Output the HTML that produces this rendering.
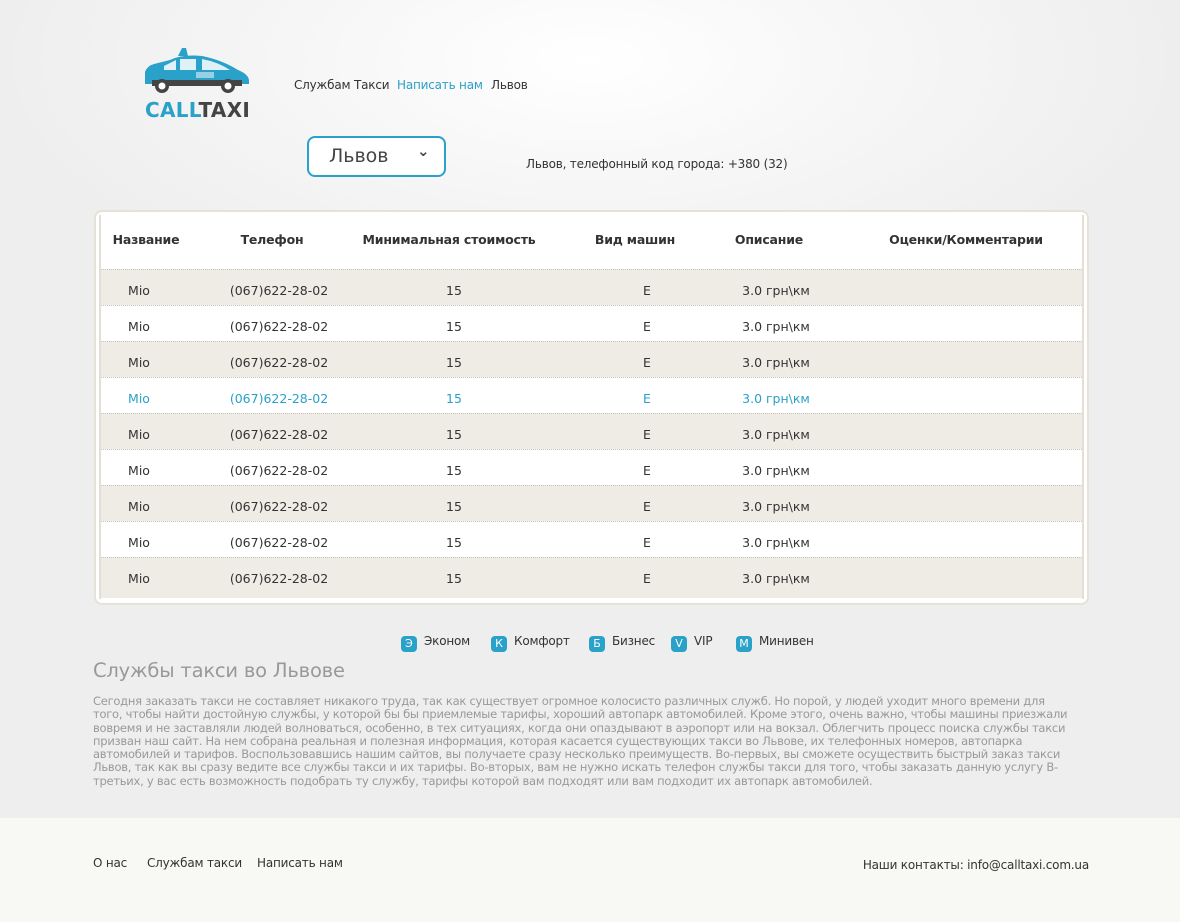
<!DOCTYPE html>
<html><head><meta charset="utf-8"><style>
body{margin:0;width:1180px;height:922px;position:relative;font-family:"DejaVu Sans","Liberation Sans",sans-serif;background:#eeeeee;overflow:hidden;color:#333}
.bg{position:absolute;left:0;top:0;width:1180px;height:818px;background:radial-gradient(ellipse 600px 260px at 590px 60px,#fff 0%,#f6f6f6 50%,#eeeeee 100%)}
.a{position:absolute;white-space:nowrap}
.nav{font-size:12px;top:78px;letter-spacing:-0.2px}
.sel{left:307px;top:136px;width:135px;height:37px;border:2px solid #2aa1c8;border-radius:8px;background:#fff}
.box{left:94px;top:210px;width:991px;height:391px;border:2px solid #e6e2d8;border-radius:8px;background:#fff}
.inner{left:99px;top:215px;width:981px;height:384px;border:2px solid #e3dfd5;border-top:none;border-bottom:none}
.row{position:absolute;left:101px;width:981px;height:35px;border-top:1px dotted #c8c4bb;font-size:12.5px}
.row span{position:absolute;top:13px;transform:translateX(-50%)}
.sh{background:#efece6}
.hd{font-size:12.5px;font-weight:bold;top:232px;transform:translateX(-50%);color:#333;letter-spacing:-0.2px}
.lg{font-size:12px;top:634px;letter-spacing:-0.2px}
.ic{display:inline-block;width:16px;height:16px;border-radius:4px;background:#2aa1c8;color:#fff;font-size:11px;text-align:center;line-height:16px;margin-right:7px;vertical-align:-2px;letter-spacing:0}
.txt{left:93px;top:695px;width:975px;font-size:11.5px;line-height:13.3px;color:#999;white-space:normal;letter-spacing:-0.25px}
.ft{position:absolute;left:0;top:818px;width:1180px;height:104px;background:#f8f9f4}
</style></head><body>
<div class="bg"></div>
<svg class="a" style="left:142px;top:44px" width="110" height="56" viewBox="0 0 110 52">
<path d="M3 34 L3 26 Q5 20 12 18 L28 14 Q40 8 60 10 Q80 14 96 24 Q106 28 107 34 L107 38 L3 38 Z" fill="#2aa1c8"/>
<path d="M36 10 L40 2 L44 2 L46 10 Z" fill="#2aa1c8"/>
<path d="M22 20 L34 14 L34 24 L22 24 Z M38 13 L54 13 L54 24 L38 24 Z M60 13 Q76 16 88 24 L60 24 Z" fill="#fff" opacity=".85"/>
<rect x="54" y="26" width="18" height="6" fill="#fff" opacity=".5"/>
<rect x="10" y="34" width="90" height="6" fill="#444"/>
<circle cx="20" cy="40" r="7" fill="#444"/><circle cx="20" cy="40" r="3.5" fill="#fff"/>
<circle cx="86" cy="40" r="7" fill="#444"/><circle cx="86" cy="40" r="3.5" fill="#fff"/>
</svg>
<div class="a" style="left:145px;top:98px;font-size:20px;font-weight:bold;letter-spacing:0.3px;color:#2aa1c8">CALL<span style="color:#444">TAXI</span></div>
<div class="a nav" style="left:294px">Службам Такси</div>
<div class="a nav" style="left:397px;color:#2aa1c8">Написать нам</div>
<div class="a nav" style="left:491px">Львов</div>
<div class="a sel"><span style="position:absolute;left:20px;top:7px;font-size:19px;color:#444">Львов</span><span style="position:absolute;left:108px;top:4px;font-size:15px;color:#444;font-weight:bold">⌄</span></div>
<div class="a" style="left:526px;top:157px;font-size:12px;letter-spacing:-0.2px">Львов, телефонный код города: +380 (32)</div>
<div class="a box"></div>
<div class="a inner"></div>
<div class="a hd" style="left:146px">Название</div>
<div class="a hd" style="left:272px">Телефон</div>
<div class="a hd" style="left:449px">Минимальная стоимость</div>
<div class="a hd" style="left:635px">Вид машин</div>
<div class="a hd" style="left:769px">Описание</div>
<div class="a hd" style="left:966px">Оценки/Комментарии</div>
<div class="row sh" style="top:269px"><span style="left:38px">Mio</span><span style="left:178px">(067)622-28-02</span><span style="left:353px">15</span><span style="left:546px">E</span><span style="left:675px">3.0 грн\км</span></div>
<div class="row" style="top:305px;background:#fff"><span style="left:38px">Mio</span><span style="left:178px">(067)622-28-02</span><span style="left:353px">15</span><span style="left:546px">E</span><span style="left:675px">3.0 грн\км</span></div>
<div class="row sh" style="top:341px"><span style="left:38px">Mio</span><span style="left:178px">(067)622-28-02</span><span style="left:353px">15</span><span style="left:546px">E</span><span style="left:675px">3.0 грн\км</span></div>
<div class="row" style="top:377px;color:#2aa1c8"><span style="left:38px">Mio</span><span style="left:178px">(067)622-28-02</span><span style="left:353px">15</span><span style="left:546px">E</span><span style="left:675px">3.0 грн\км</span></div>
<div class="row sh" style="top:413px"><span style="left:38px">Mio</span><span style="left:178px">(067)622-28-02</span><span style="left:353px">15</span><span style="left:546px">E</span><span style="left:675px">3.0 грн\км</span></div>
<div class="row" style="top:449px"><span style="left:38px">Mio</span><span style="left:178px">(067)622-28-02</span><span style="left:353px">15</span><span style="left:546px">E</span><span style="left:675px">3.0 грн\км</span></div>
<div class="row sh" style="top:485px"><span style="left:38px">Mio</span><span style="left:178px">(067)622-28-02</span><span style="left:353px">15</span><span style="left:546px">E</span><span style="left:675px">3.0 грн\км</span></div>
<div class="row" style="top:521px"><span style="left:38px">Mio</span><span style="left:178px">(067)622-28-02</span><span style="left:353px">15</span><span style="left:546px">E</span><span style="left:675px">3.0 грн\км</span></div>
<div class="row sh" style="top:557px;height:40px"><span style="left:38px">Mio</span><span style="left:178px">(067)622-28-02</span><span style="left:353px">15</span><span style="left:546px">E</span><span style="left:675px">3.0 грн\км</span></div>
<div class="a lg" style="left:401px"><span class="ic">Э</span>Эконом</div>
<div class="a lg" style="left:491px"><span class="ic">К</span>Комфорт</div>
<div class="a lg" style="left:589px"><span class="ic">Б</span>Бизнес</div>
<div class="a lg" style="left:671px"><span class="ic">V</span>VIP</div>
<div class="a lg" style="left:736px"><span class="ic">М</span>Минивен</div>
<div class="a" style="left:93px;top:659px;font-size:19.5px;color:#999;letter-spacing:-0.2px">Службы такси во Львове</div>
<div class="a txt">Сегодня заказать такси не составляет никакого труда, так как существует огромное колосисто различных служб. Но порой, у людей уходит много времени для того, чтобы найти достойную службы, у которой бы бы приемлемые тарифы, хороший автопарк автомобилей. Кроме этого, очень важно, чтобы машины приезжали вовремя и не заставляли людей волноваться, особенно, в тех ситуациях, когда они опаздывают в аэропорт или на вокзал. Облегчить процесс поиска службы такси призван наш сайт. На нем собрана реальная и полезная информация, которая касается существующих такси во Львове, их телефонных номеров, автопарка автомобилей и тарифов. Воспользовавшись нашим сайтов, вы получаете сразу несколько преимуществ. Во-первых, вы сможете осуществить быстрый заказ такси Львов, так как вы сразу ведите все службы такси и их тарифы. Во-вторых, вам не нужно искать телефон службы такси для того, чтобы заказать данную услугу В-третьих, у вас есть возможность подобрать ту службу, тарифы которой вам подходят или вам подходит их автопарк автомобилей.</div>
<div class="ft"></div>
<div class="a" style="left:93px;top:856px;font-size:12px;letter-spacing:-0.2px">О нас</div>
<div class="a" style="left:147px;top:856px;font-size:12px;letter-spacing:-0.2px">Службам такси</div>
<div class="a" style="left:257px;top:856px;font-size:12px;letter-spacing:-0.2px">Написать нам</div>
<div class="a" style="right:91px;top:858px;font-size:12px;letter-spacing:-0.2px">Наши контакты: info@calltaxi.com.ua</div>
</body></html>
